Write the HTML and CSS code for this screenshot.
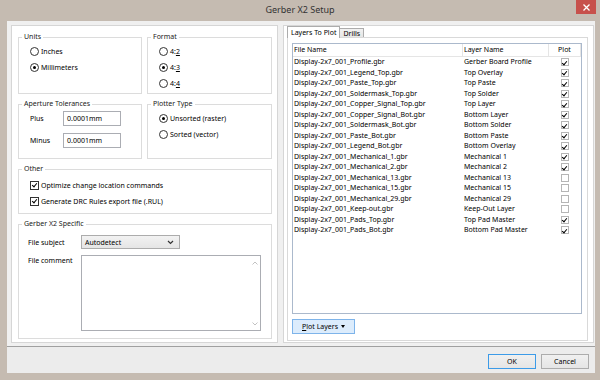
FILE: index.html
```html
<!DOCTYPE html>
<html lang="en">
<head>
    <meta charset="UTF-8"/>
    <title>Gerber X2 Setup</title>
    <link rel="stylesheet" href="styles.css">
</head>
<body>
<div class="window">
    <div class="titlebar">
        <div class="title">Gerber X2 Setup</div>
        <div class="close">
            <svg width="7" height="7" viewBox="0 0 7 7"><path d="M0.5 0.5 L6.5 6.5 M6.5 0.5 L0.5 6.5" stroke="#fff" stroke-width="1.3"/></svg>
        </div>
    </div>

    <div class="client">
        <div class="panes">
            <!-- left side: options -->
            <div class="pane-left">
                <fieldset class="group">
                    <legend>Units</legend>
                    <div class="opts">
                        <label class="opt"><i class="radio"></i><span>Inches</span></label>
                        <label class="opt"><i class="radio on"></i><span>Millimeters</span></label>
                    </div>
                </fieldset>
                <fieldset class="group">
                    <legend>Format</legend>
                    <div class="opts opts-last">
                        <label class="opt"><i class="radio"></i><span>4:<u>2</u></span></label>
                        <label class="opt"><i class="radio on"></i><span>4:<u>3</u></span></label>
                        <label class="opt"><i class="radio"></i><span>4:<u>4</u></span></label>
                    </div>
                </fieldset>

                <fieldset class="group">
                    <legend>Aperture Tolerances</legend>
                    <div class="tol">
                        <span>Plus</span>
                        <span class="field">0.0001mm</span>
                        <span>Minus</span>
                        <span class="field">0.0001mm</span>
                    </div>
                </fieldset>
                <fieldset class="group">
                    <legend>Plotter Type</legend>
                    <div class="opts">
                        <label class="opt"><i class="radio on"></i><span>Unsorted (raster)</span></label>
                        <label class="opt"><i class="radio"></i><span>Sorted (vector)</span></label>
                    </div>
                </fieldset>

                <fieldset class="group wide">
                    <legend>Other</legend>
                    <div class="opts opts-other">
                        <label class="opt"><i class="check on"></i><span>Optimize change location commands</span></label>
                        <label class="opt"><i class="check on"></i><span>Generate DRC Rules export file (.RUL)</span></label>
                    </div>
                </fieldset>

                <fieldset class="group wide">
                    <legend>Gerber X2 Specific</legend>
                    <div class="x2">
                        <span class="x2-label">File subject</span>
                        <div class="select"><span>Autodetect</span>
                            <svg width="7" height="5" viewBox="0 0 7 5"><path d="M1 1 L3.5 3.5 L6 1" stroke="#333" stroke-width="1.2" fill="none"/></svg>
                        </div>
                        <span class="x2-label x2-top">File comment</span>
                        <div class="memo">
                            <div class="memo-scroll">
                                <svg width="6" height="4" viewBox="0 0 6 4"><path d="M0.5 3.5 L3 1 L5.5 3.5" stroke="#c2c2c2" fill="none"/></svg>
                                <svg width="6" height="4" viewBox="0 0 6 4"><path d="M0.5 0.5 L3 3 L5.5 0.5" stroke="#c2c2c2" fill="none"/></svg>
                            </div>
                        </div>
                    </div>
                </fieldset>
            </div>

            <!-- right side: layers -->
            <div class="pane-right">
                <div class="tabs">
                    <div class="tab active">Layers To Plot</div>
                    <div class="tab">Drills</div>
                </div>
                <div class="tab-page">
                    <div class="list">
                        <div class="list-head">
                            <span>File Name</span>
                            <span>Layer Name</span>
                            <span class="center">Plot</span>
                        </div>
                        <div class="row"><span>Display-2x7_001_Profile.gbr</span><span>Gerber Board Profile</span><span class="center"><i class="cb on"></i></span></div>
                        <div class="row"><span>Display-2x7_001_Legend_Top.gbr</span><span>Top Overlay</span><span class="center"><i class="cb on"></i></span></div>
                        <div class="row"><span>Display-2x7_001_Paste_Top.gbr</span><span>Top Paste</span><span class="center"><i class="cb on"></i></span></div>
                        <div class="row"><span>Display-2x7_001_Soldermask_Top.gbr</span><span>Top Solder</span><span class="center"><i class="cb on"></i></span></div>
                        <div class="row"><span>Display-2x7_001_Copper_Signal_Top.gbr</span><span>Top Layer</span><span class="center"><i class="cb on"></i></span></div>
                        <div class="row"><span>Display-2x7_001_Copper_Signal_Bot.gbr</span><span>Bottom Layer</span><span class="center"><i class="cb on"></i></span></div>
                        <div class="row"><span>Display-2x7_001_Soldermask_Bot.gbr</span><span>Bottom Solder</span><span class="center"><i class="cb on"></i></span></div>
                        <div class="row"><span>Display-2x7_001_Paste_Bot.gbr</span><span>Bottom Paste</span><span class="center"><i class="cb on"></i></span></div>
                        <div class="row"><span>Display-2x7_001_Legend_Bot.gbr</span><span>Bottom Overlay</span><span class="center"><i class="cb on"></i></span></div>
                        <div class="row"><span>Display-2x7_001_Mechanical_1.gbr</span><span>Mechanical 1</span><span class="center"><i class="cb on"></i></span></div>
                        <div class="row"><span>Display-2x7_001_Mechanical_2.gbr</span><span>Mechanical 2</span><span class="center"><i class="cb on"></i></span></div>
                        <div class="row"><span>Display-2x7_001_Mechanical_13.gbr</span><span>Mechanical 13</span><span class="center"><i class="cb"></i></span></div>
                        <div class="row"><span>Display-2x7_001_Mechanical_15.gbr</span><span>Mechanical 15</span><span class="center"><i class="cb"></i></span></div>
                        <div class="row"><span>Display-2x7_001_Mechanical_29.gbr</span><span>Mechanical 29</span><span class="center"><i class="cb"></i></span></div>
                        <div class="row"><span>Display-2x7_001_Keep-out.gbr</span><span>Keep-Out Layer</span><span class="center"><i class="cb"></i></span></div>
                        <div class="row"><span>Display-2x7_001_Pads_Top.gbr</span><span>Top Pad Master</span><span class="center"><i class="cb on"></i></span></div>
                        <div class="row"><span>Display-2x7_001_Pads_Bot.gbr</span><span>Bottom Pad Master</span><span class="center"><i class="cb on"></i></span></div>
                    </div>
                    <div class="plot-btn"><span><u>P</u>lot Layers</span><i class="caret"></i></div>
                </div>
            </div>
        </div>

        <div class="footer">
            <div class="btn btn-default">OK</div>
            <div class="btn">Cancel</div>
        </div>
    </div>
</div>
</body>
</html>
```

FILE: styles.css
```css
* {
    box-sizing: border-box;
}

body {
    margin: 0;
    width: 600px;
    height: 380px;
    overflow: hidden;
    background-color: #c5bbb1;
    font-family: "Noto Sans", "Open Sans", sans-serif;
    font-size: 7px;
    color: #000;
}

.window {
    display: flex;
    flex-direction: column;
    height: 380px;
}

/* title bar */
.titlebar {
    height: 21px;
    display: grid;
    grid-template-columns: 1fr auto 1fr;
    align-items: start;
}

.title {
    grid-column: 2;
    font-size: 9px;
    line-height: 20px;
    color: #333;
}

.close {
    grid-column: 3;
    justify-self: end;
    width: 20px;
    height: 14px;
    margin-right: 4px;
    background-color: #c7504b;
    display: flex;
    align-items: center;
    justify-content: center;
}

.client {
    flex: 1;
    margin: 0 5px 7px 7px;
    background-color: #f0f0f0;
    display: flex;
    flex-direction: column;
}

.panes {
    display: flex;
    gap: 5px;
    padding: 4px 1px 0 4px;
    height: 322px;
}

/* left pane */
.pane-left {
    width: 268px;
    background-color: #fff;
    border: 1px solid #d6d6d6;
    padding: 5px 5px 4px 6px;
    display: grid;
    grid-template-columns: 124px 1fr;
    grid-template-rows: auto auto auto 1fr;
    gap: 4px 5px;
}

.group {
    margin: 0;
    padding: 0;
    min-width: 0;
    border: 1px solid #dcdcdc;
}

.group.wide {
    grid-column: 1 / 3;
}

.group legend {
    margin-left: 3px;
    padding: 0 2px;
    line-height: 12px;
    color: #1a1a1a;
}

.opts {
    display: flex;
    flex-direction: column;
    padding: 0 0 2px 11px;
}

.opts-other {
    padding: 2px 0 4px 11px;
}

.opt {
    height: 16px;
    display: flex;
    align-items: center;
    gap: 2px;
}

.opt u {
    text-decoration-thickness: 1px;
}

.radio {
    width: 9px;
    height: 9px;
    border: 1px solid #333;
    border-radius: 50%;
    background-color: #fff;
    display: flex;
    align-items: center;
    justify-content: center;
}

.radio.on::after {
    content: "";
    width: 3px;
    height: 3px;
    border-radius: 50%;
    background-color: #000;
}

.check,
.cb {
    width: 9px;
    height: 9px;
    border: 1px solid #333;
    background-color: #fff;
    display: flex;
    justify-content: center;
}

.check.on::after,
.cb.on::after {
    content: "";
    width: 2px;
    height: 4px;
    margin-top: 0.5px;
    border-right: 1.5px solid #000;
    border-bottom: 1.5px solid #000;
    transform: rotate(40deg);
}

.tol {
    display: grid;
    grid-template-columns: 33px 58px;
    row-gap: 7px;
    align-items: center;
    padding: 1px 0 10px 11px;
}

.field {
    height: 15px;
    border: 1px solid #abadb3;
    padding-left: 3px;
    line-height: 13px;
}

.x2 {
    display: grid;
    grid-template-columns: 53px 180px;
    row-gap: 6px;
    padding: 5px 0 7px 9px;
}

.x2-label {
    align-self: center;
}

.x2-top {
    align-self: start;
    margin-top: 1px;
}

.select {
    width: 99px;
    height: 14px;
    border: 1px solid #acacac;
    background: linear-gradient(#f2f2f2, #e5e5e5);
    padding: 0 5px 0 3px;
    display: flex;
    align-items: center;
    justify-content: space-between;
}

.memo {
    height: 76px;
    border: 1px solid #abadb3;
    background-color: #fff;
    display: flex;
    justify-content: flex-end;
}

.memo-scroll {
    width: 10px;
    padding: 5px 0 4px;
    display: flex;
    flex-direction: column;
    align-items: center;
    justify-content: space-between;
}

/* right pane */
.pane-right {
    flex: 1;
    background-color: #fff;
    border: 1px solid #d6d6d6;
    padding: 0 5px 1px 3px;
    display: flex;
    flex-direction: column;
}

.tabs {
    display: flex;
    align-items: flex-end;
    height: 12px;
    margin-bottom: -1px;
}

.tab {
    height: 10px;
    padding: 0 3px;
    line-height: 9px;
    border: 1px solid #acacac;
    border-left: none;
    background: linear-gradient(#f2f2f2, #e6e6e6);
}

.tab.active {
    height: 12px;
    line-height: 11px;
    border-left: 1px solid #acacac;
    border-bottom: none;
    background: #fff;
    position: relative;
    z-index: 1;
}

.tab-page {
    flex: 1;
    border: 1px solid #d9d9d9;
    padding: 5px 5px 6px 4px;
    display: flex;
    flex-direction: column;
}

.list {
    flex: 1;
    border: 1px solid #abb9cc;
}

.list-head,
.row {
    display: grid;
    grid-template-columns: 169px 86px 33px;
}

.list-head {
    height: 13px;
    border-bottom: 1px solid #e5e5e5;
    line-height: 12px;
}

.list-head span {
    padding-left: 1px;
}

.list-head span + span {
    border-left: 1px solid #e5e5e5;
}

.list-head span:last-child {
    border-right: 1px solid #e5e5e5;
}

.row {
    height: 10.5px;
    line-height: 10.5px;
}

.row span {
    padding-left: 1px;
    white-space: nowrap;
}

.row span + span {
    padding-left: 2px;
}

.center {
    display: flex;
    align-items: center;
    justify-content: center;
    padding-left: 0 !important;
}

.cb {
    width: 8px;
    height: 8px;
    border-color: #b5b5b5;
}

.plot-btn {
    margin-top: 5px;
    width: 63px;
    height: 15px;
    border: 1px solid #7eb4ea;
    background-color: #dcecfc;
    display: flex;
    align-items: center;
    justify-content: center;
    gap: 3px;
}

.caret {
    width: 0;
    height: 0;
    border-left: 2.5px solid transparent;
    border-right: 2.5px solid transparent;
    border-top: 3px solid #000;
}

/* bottom buttons */
.footer {
    flex: 1;
    margin-top: 3px;
    border-top: 1px solid #a0a0a0;
    background-color: #ececec;
    display: flex;
    justify-content: flex-end;
    align-items: flex-start;
    gap: 5px;
    padding: 7px 6px 0 0;
}

.btn {
    width: 48px;
    height: 15px;
    border: 1px solid #acacac;
    background: linear-gradient(#f0f0f0, #e5e5e5);
    display: flex;
    align-items: center;
    justify-content: center;
}

.btn-default {
    border-color: #3c9be8;
}
```
